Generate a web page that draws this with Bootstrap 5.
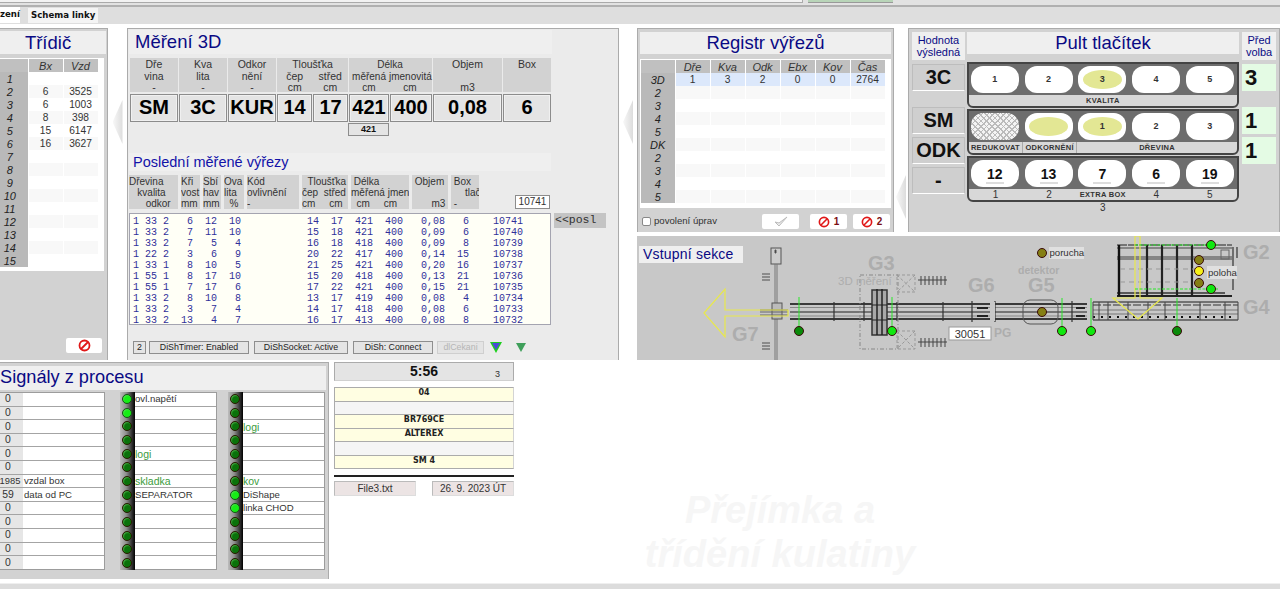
<!DOCTYPE html>
<html lang="cs">
<head>
<meta charset="UTF-8" />
<meta name="viewport" content="width=device-width, initial-scale=1" />
<title>Přejímka a třídění kulatiny</title>
<link href="https://cdn.jsdelivr.net/npm/bootstrap@5.3.0/dist/css/bootstrap.min.css" rel="stylesheet" />
<style>
body { background: #fff; font-family: "Liberation Sans", Arial, sans-serif; font-size: 11px; color: #333; overflow: hidden; }
.desk { width: 1280px; height: 589px; overflow: hidden; }

/* top strip and tabs */
.top-strip { height: 7px; background: #e2e2e2; border-bottom: 2px solid #b0b0b0; align-items: flex-start; }
.strip-white { width: 803px; height: 3px; background: #f2f2f2; border-bottom: 1px solid #aaa; border-right: 1px solid #aaa; }
.strip-green { width: 85px; height: 3px; margin-left: 5px; background: #b8d4b8; border-bottom: 1px solid #999; }
.tab-strip { height: 17px; background: #dedede; margin-bottom: 4px; }
.tab-strip .nav-link { font-family: "DejaVu Sans", sans-serif; font-weight: 700; font-size: 8.6px; color: #111; padding: 2px 3px; height: 15px; line-height: 11px; background: #f4f4f4; margin: 1px 0 0 8px; }
.tab-strip .nav-link.active-tab { background: #fff; margin: 0; width: 20px; height: 16px; padding: 2px 0 0 0; }

.win { border: 1px solid #ababab; border-bottom: 0; }
.win-mid { background: #d2d2d2; }
.win-light { background: #ebebeb; }
.win-title { font-size: 18.5px; line-height: 23px; color: #0a0a84; background: #efefef; }

.desk-top { height: 332px; }
.desk-bottom { height: 217px; margin-top: 2px; }
.chev-gap { flex: 0 0 auto; display: flex; justify-content: center; }
.chev { width: 10px; height: 44px; margin-top: 72px; background: linear-gradient(90deg, #f8f8f8, #dcdcdc); clip-path: polygon(100% 0, 0 50%, 100% 100%); }
.gap-19 { width: 19px; }
.gap-18 { width: 18px; }

/* Tridic */
.sorter { width: 108px; border-left: 0; }
.sorter .win-title { width: 106px; margin: 2px 0 4px; text-align: center; padding-right: 10px; }
.sorter-box { background: #fff; width: 104px; height: 213px; padding-top: 1px; }
.grid-tbl { border-collapse: collapse; table-layout: fixed; }
.grid-tbl td, .grid-tbl th { height: 13px; padding: 0; text-align: center; font-size: 10.2px; line-height: 12px; font-weight: 400; border-right: 1px solid #fff; }
.grid-tbl th { background: #b9b9b9; font-size: 11px; font-style: italic; color: #222; }
.grid-tbl thead th { background: #c0c0c0; color: #333; }
.grid-tbl tbody tr:nth-child(even) td { background: #f8f8f8; }
.sorter .grid-tbl th:first-child { width: 28px; padding-right: 8px; }
.sorter .grid-tbl td, .sorter .grid-tbl thead th:not(:first-child) { width: 35px; }
.stop-btn { display: flex; align-items: center; justify-content: center; padding: 0; border: 0; border-radius: 2px; background: #fff; width: 36px; height: 15px; color: #7a0d12; font-weight: 700; font-size: 10px; gap: 4px; }
.sorter .stop-btn { margin: 67px 0 0 66px; }

/* Mereni 3D */
.measure { width: 492px; padding: 1px 0 0 1px; position: relative; }
.measure .win-title { width: 423px; height: 24px; padding-left: 6px; margin-bottom: 4px; }
.meas-grid { display: grid; grid-template-columns: 48px 48px 48px 35px 35px 40px 42px 69px 48px; column-gap: 1px; margin-left: 1px; width: 422px; }
.meas-head { background: #d2d2d2; height: 34px; text-align: center; font-size: 10.5px; line-height: 11.5px; padding-top: 1px; color: #333; }
.meas-head.wide2 { grid-column: span 2; display: grid; grid-template-columns: 1fr 1fr; }
.meas-head.wide2 > div:first-child { grid-column: span 2; }
.meas-head.tight { font-size: 10px; white-space: nowrap; grid-template-columns: 40px 42px; }
.meas-val { margin-top: 2px; height: 28px; background: #e4e4e4; border: 1px solid #8c8c8c; box-shadow: inset 0 0 0 1px #f0f0f0; font-weight: 700; font-size: 20px; line-height: 25px; text-align: center; color: #000; overflow: hidden; white-space: nowrap; }
.meas-sub { margin: 1px 0 0 219px; width: 41px; height: 13px; border: 1px solid #8c8c8c; background: #e4e4e4; font-size: 9px; font-weight: 700; line-height: 11px; text-align: center; color: #111; }
.sub-title { width: 422px; height: 18px; margin-top: 17px; background: #efefef; color: #1212a8; font-size: 14.5px; line-height: 18px; padding-left: 4px; }
.hist-head { display: grid; grid-template-columns: 49px 19px 18px 20px 52px 46px 58px 36px 28px; column-gap: 3px; margin-top: 4px; height: 34px; align-items: stretch; position: relative; }
.hist-head > div { background: #d2d2d2; font-size: 10px; line-height: 11px; white-space: pre; padding-top: 1px; color: #333; overflow: hidden; }
.hist-head > .last-id { position: absolute; left: 386px; top: 20px; width: 35px; height: 14px; border: 1px solid #8c8c8c; background: #fff; text-align: center; padding: 0; line-height: 12px; font-size: 10px; }
.hist-wrap { display: flex; margin-top: 4px; }
.hist-list { width: 422px; height: 112px; border: 1px solid #a4a4b0; background: #fffff6; margin: 0; padding: 2px 0 0 3px; font-family: "Liberation Mono", monospace; font-size: 10px; line-height: 11px; color: #30309a; overflow: hidden; white-space: pre; }
.posl { margin-left: 3px; width: 52px; height: 15px; background: #c4c4c4; font-family: "Liberation Mono", monospace; font-size: 11.5px; line-height: 13px; padding-left: 1px; color: #333; }
.status-row { display: flex; align-items: center; margin-top: 16px; margin-left: 4px; }
.stat { height: 13px; border: 1px solid #8e8e8e; background: #e4e4e4; font-size: 8.8px; line-height: 11px; text-align: center; color: #222; margin-right: 3px; white-space: nowrap; }
.stat.off { color: #b5b5b5; border-color: #cfcfcf; margin-right: 6px; }
.s-num { width: 13px; }
.s-timer { width: 100px; margin-right: 5px; }
.s-sock { width: 94px; margin-right: 5px; }
.s-conn { width: 80px; margin-right: 4px; }
.s-wait { width: 47px; }
.tri { width: 0; height: 0; border-left: 6px solid transparent; border-right: 6px solid transparent; }
.tri-blue { border-top: 11px solid #1ed01e; position: relative; }
.tri-blue::after { content: ""; position: absolute; left: -4px; top: -10px; border-left: 4px solid transparent; border-right: 4px solid transparent; border-top: 7px solid #4a4ad8; }
.tri-green { margin-left: 14px; border-left-width: 5px; border-right-width: 5px; border-top: 9px solid #3f9f5a; }

/* right column */
.right-col { width: 643px; }
.reg { width: 257px; height: 204px; padding: 3px 2px 0; position: relative; }
.reg .win-title { height: 22px; line-height: 22px; text-align: center; margin-bottom: 5px; }
.reg-box { background: #fff; height: 149px; padding: 1px 0 0 1px; }
.reg .grid-tbl th:first-child { width: 34px; }
.reg .grid-tbl td, .reg .grid-tbl thead th:not(:first-child) { width: 35px; }
.reg .grid-tbl tr.cur td { background: #dce8fb; }
.reg-foot { display: flex; align-items: center; height: 23px; padding: 4px 1px 0 2px; }
.reg-foot .form-check-input { width: 9px; height: 9px; margin: 0 3px 0 0; border-radius: 2px; border-color: #888; }
.reg-foot label { font-size: 9.6px; color: #333; }
.reg-foot .stop-btn { width: 37px; margin-left: 6px; }
.reg-foot .check-btn { margin-left: auto; margin-right: 5px; }

.chev-pult { position: absolute; right: -13px; top: 74px; width: 10px; }
.pult { width: 372px; height: 204px; margin-left: 14px; padding: 3px 3px 0 3px; display: flex; gap: 2px; }
.side-col { width: 53px; }
.side-head { height: 28px; background: #efefef; color: #0a0a84; font-size: 11px; line-height: 12px; text-align: center; padding-top: 2px; margin-bottom: 4px; }
.side-val { height: 27px; margin-bottom: 3px; background: #cfcfcf; border: 1px solid #bdbdbd; border-bottom: 1px solid #fff; font-size: 20px; font-weight: 700; line-height: 25px; text-align: center; color: #111; }
.side-val.green { background: #e4fbe4; border-color: #e4fbe4; text-align: left; padding-left: 2px; font-size: 22px; }
.side-val.drop { margin-top: 16px; }
.mid-col { width: 273px; }
.mid-col .win-title { height: 22px; text-align: center; line-height: 22px; margin-bottom: 8px; }
.pr-col { width: 34px; margin-left: 1px; }
.btn-box { border: 2px solid #444; border-radius: 0 0 6px 6px; margin-bottom: 1px; background: #d8d8d8; width: 272px; overflow: hidden; }
.btn-cells { display: flex; background: #6d6d6d; padding: 2px 3px 2px 2px; justify-content: space-between; }
.pill { width: 48px; height: 27px; background: #fff; border: 0; padding: 0; border-radius: 12px; font-size: 9px; font-weight: 700; color: #333; display: flex; align-items: center; justify-content: center; }
.ell { width: 39px; height: 19px; border-radius: 50%; background: #e3e794; display: flex; align-items: center; justify-content: center; }
.pill.hatch { background: repeating-linear-gradient(45deg, #bbb 0 1px, transparent 1px 4px), repeating-linear-gradient(-45deg, #bbb 0 1px, #f4f4f4 1px 4px); }
.num-tile { width: 18px; height: 20px; background: #fff; border-bottom: 2px solid #ddd; font-size: 14px; line-height: 20px; color: #111; text-align: center; }
.btn-labels { display: flex; height: 11px; font-size: 7.5px; line-height: 11px; font-weight: 700; color: #333; text-align: center; letter-spacing: .3px; white-space: nowrap; }
.btn-labels > div { flex: 1 1 0; }
.btn-labels > .drev { flex: 3 1 0; }
.btn-labels .plain { font-size: 10px; font-weight: 400; }
.lab-sep { border-right: 1px solid #aaa; }
.under-3 { text-align: center; font-size: 10px; line-height: 10px; color: #333; width: 272px; }

.entry { width: 643px; height: 124px; margin-top: 4px; background: #c8c8c8; position: relative; overflow: hidden; }
.entry svg { display: block; }
.entry-title { position: absolute; left: 2px; top: 10px; width: 104px; height: 17px; background: #efefef; color: #0a0a84; font-size: 14px; line-height: 17px; padding-left: 4px; letter-spacing: .2px; }
.diag-g { font-family: "Liberation Sans", Arial, sans-serif; font-weight: 700; font-size: 20px; fill: #adadad; }
.diag-s { font-size: 10.5px; }
.diag-n { font-size: 11.5px; font-weight: 400; }
.diag-p { font-size: 12px; }
.diag-t { font-family: "Liberation Sans", Arial, sans-serif; font-size: 9.6px; fill: #333; }
.diag-num { font-size: 11px; }

/* signals */
.signals { width: 329px; height: 217px; background: #d2d2d2; border-left: 0; padding-top: 3px; }
.signals .win-title { width: 326px; height: 24px; margin-bottom: 2px; font-size: 18.2px; }
.sig-wrap { display: flex; }
.sig-a { width: 105px; margin-right: 15px; }
.sig-b { margin-right: 11px; }
.sig-tbl { display: flex; height: 178px; }
.led-strip { width: 15px; display: flex; flex-direction: column; background: linear-gradient(90deg, #bcbcbc, #909090 40%, #000); }
.led-strip > div { flex: 1 1 0; display: flex; align-items: center; justify-content: flex-start; padding-left: 2px; }
.led { width: 10px; height: 10px; border-radius: 50%; background: #0a720a; border: 1px solid #2a1a00; box-shadow: inset 1px 1px 1px rgba(120,220,120,.5); }
.led.on { background: #16ee16; border-color: #185018; }
.sig-rows { display: flex; flex-direction: column; width: 82px; border: 1px solid #9c9c9c; border-left: 0; }
.sig-a .sig-rows { width: 105px; }
.sig-rows > div { flex: 1 1 0; background: #fff; border-bottom: 1px solid #a4a4a4; font-size: 9.6px; line-height: 12px; white-space: nowrap; color: #333; display: flex; align-items: center; }
.sig-rows > div:last-child { border-bottom: 0; }
.sig-rows > .green-t { color: #3c9c3c; font-size: 10.5px; }
.sval { width: 23px; height: 100%; flex: 0 0 23px; background: #e6e6e6; display: flex; justify-content: center; padding-right: 7px; align-items: center; color: #333; font-size: 10.4px; margin-right: 1px; }
.sval.sval-wide { padding-right: 3px; font-size: 9.4px; }

/* clock column */
.clock-col { width: 180px; margin-left: 5px; }
.clock { height: 19px; background: #e4e4e4; border: 1px solid #ababab; border-bottom-color: #d0d0d0; display: flex; font-weight: 700; font-size: 14px; line-height: 17px; color: #111; margin-bottom: 6px; position: relative; }
.clock-n { position: absolute; right: 13px; top: 3px; font-size: 9px; font-weight: 400; color: #333; }
.ticket { height: 13.6px; background: #fffee2; border: 1px solid #ababab; border-right-color: #d4d4d4; border-bottom: 0; font-family: "DejaVu Sans", sans-serif; font-weight: 700; font-size: 8px; line-height: 10px; text-align: center; color: #222; }
.ticket.blank { background: #f5f5f5; }
.ticket.ticket-end { border-bottom: 1px solid #ababab; height: 14px; }
.heavy-line { height: 2px; background: #222; margin: 6px 0 4px; width: 180px; }
.file-cell { width: 82px; height: 15px; background: #ece4e4; border: 1px solid #ddd; border-top: 1px solid #bbb; border-left: 1px solid #bbb; font-size: 10px; line-height: 13px; text-align: center; color: #333; }

.watermark { width: 400px; margin-left: 66px; padding-top: 126px; text-align: center; font-weight: 700; font-style: italic; font-size: 38px; line-height: 44px; color: #f6f6f6; white-space: nowrap; }
.foot-strip { height: 6px; margin-top: 4px; background: #dcdcdc; border-top: 1px solid #efefef; }
</style>
</head>
<body>
<div class="desk">
    <div class="top-strip d-flex"><div class="strip-white"></div><div class="strip-green"></div></div>
    <!-- Tabs -->
    <ul class="nav tab-strip">
        <li class="nav-item"><a class="nav-link active-tab" href="#">zení</a></li>
        <li class="nav-item"><a class="nav-link" href="#">Schema linky</a></li>
    </ul>

    <div class="d-flex desk-top">
        <!-- Tridic -->
        <div class="win win-mid sorter">
            <div class="win-title">Třídič</div>
            <div class="sorter-box">
                <table class="grid-tbl">
                    <thead><tr><th></th><th>Bx</th><th>Vzd</th></tr></thead>
                    <tbody>
                    <tr><th>1</th><td></td><td></td></tr>
                    <tr><th>2</th><td>6</td><td>3525</td></tr>
                    <tr><th>3</th><td>6</td><td>1003</td></tr>
                    <tr><th>4</th><td>8</td><td>398</td></tr>
                    <tr><th>5</th><td>15</td><td>6147</td></tr>
                    <tr><th>6</th><td>16</td><td>3627</td></tr>
                    <tr><th>7</th><td></td><td></td></tr>
                    <tr><th>8</th><td></td><td></td></tr>
                    <tr><th>9</th><td></td><td></td></tr>
                    <tr><th>10</th><td></td><td></td></tr>
                    <tr><th>11</th><td></td><td></td></tr>
                    <tr><th>12</th><td></td><td></td></tr>
                    <tr><th>13</th><td></td><td></td></tr>
                    <tr><th>14</th><td></td><td></td></tr>
                    <tr><th>15</th><td></td><td></td></tr>
                    </tbody>
                </table>
            </div>
            <button class="stop-btn" type="button"><svg width="13" height="13" viewBox="0 0 13 13"><circle cx="6.5" cy="6.5" r="5" fill="none" stroke="#e01818" stroke-width="1.8"/><path d="M3 10 10 3" stroke="#e01818" stroke-width="1.8"/></svg></button>
        </div>
        <div class="chev-gap gap-19"><div class="chev"></div></div>

        <!-- Mereni 3D -->
        <div class="win win-light measure">
            <div class="win-title">Měření 3D</div>
            <div class="meas-grid">
                <div class="meas-head">Dře<br>vina<br>-</div>
                <div class="meas-head">Kva<br>lita<br>-</div>
                <div class="meas-head">Odkor<br>nění<br>-</div>
                <div class="meas-head wide2"><div>Tloušťka</div><div>čep<br>cm</div><div>střed<br>cm</div></div>
                <div class="meas-head wide2 tight"><div>Délka</div><div>měřená<br>cm</div><div>jmenovitá<br>cm</div></div>
                <div class="meas-head">Objem<br><br>m3</div>
                <div class="meas-head">Box</div>
                <div class="meas-val">SM</div>
                <div class="meas-val">3C</div>
                <div class="meas-val">KUR</div>
                <div class="meas-val">14</div>
                <div class="meas-val">17</div>
                <div class="meas-val">421</div>
                <div class="meas-val">400</div>
                <div class="meas-val">0,08</div>
                <div class="meas-val">6</div>
            </div>
            <div class="meas-sub">421</div>
            <div class="sub-title">Poslední měřené výřezy</div>
            <div class="hist-head">
                <div>Dřevina
   kvalita
      odkor</div>
                <div>Kři
vost
mm</div>
                <div>Sbí
hav
mm</div>
                <div>Ova
lita
  %</div>
                <div>Kód
ovlivnění
-</div>
                <div>  Tloušťka
čep  střed
cm     cm</div>
                <div> Délka
měřená jmen
  cm     cm</div>
                <div> Objem

       m3</div>
                <div> Box
     tlač
 -</div>
                <div class="last-id">10741</div>
            </div>
            <div class="hist-wrap">
<pre class="hist-list">1 33 2   6  12  10           14  17  421  400   0,08   6    10741
1 33 2   7  11  10           15  18  421  400   0,09   6    10740
1 33 2   7   5   4           16  18  418  400   0,09   8    10739
1 22 2   3   6   9           20  22  417  400   0,14  15    10738
1 33 1   8  10   5           21  25  421  400   0,20  16    10737
1 55 1   8  17  10           15  20  418  400   0,13  21    10736
1 55 1   7  17   6           17  22  421  400   0,15  21    10735
1 33 2   8  10   8           13  17  419  400   0,08   4    10734
1 33 2   3   7   4           14  17  418  400   0,08   6    10733
1 33 2  13   4   7           16  17  413  400   0,08   8    10732</pre>
                <div class="posl">&lt;&lt;posl</div>
            </div>
            <div class="status-row">
                <div class="stat s-num">2</div>
                <div class="stat s-timer">DiShTimer: Enabled</div>
                <div class="stat s-sock">DiShSocket: Active</div>
                <div class="stat s-conn">DiSh: Connect</div>
                <div class="stat off s-wait">dlCekani</div>
                <div class="tri tri-blue"></div>
                <div class="tri tri-green"></div>
            </div>
        </div>
        <div class="chev-gap gap-18"><div class="chev"></div></div>

        <!-- Right column -->
        <div class="right-col">
            <div class="d-flex">
                <div class="win win-mid reg">
                    <div class="win-title">Registr výřezů</div>
                    <div class="reg-box">
                        <table class="grid-tbl">
                            <thead><tr><th></th><th>Dře</th><th>Kva</th><th>Odk</th><th>Ebx</th><th>Kov</th><th>Čas</th></tr></thead>
                            <tbody>
                            <tr class="cur"><th>3D</th><td>1</td><td>3</td><td>2</td><td>0</td><td>0</td><td>2764</td></tr>
                            <tr><th>2</th><td></td><td></td><td></td><td></td><td></td><td></td></tr>
                            <tr><th>3</th><td></td><td></td><td></td><td></td><td></td><td></td></tr>
                            <tr><th>4</th><td></td><td></td><td></td><td></td><td></td><td></td></tr>
                            <tr><th>5</th><td></td><td></td><td></td><td></td><td></td><td></td></tr>
                            <tr><th>DK</th><td></td><td></td><td></td><td></td><td></td><td></td></tr>
                            <tr><th>2</th><td></td><td></td><td></td><td></td><td></td><td></td></tr>
                            <tr><th>3</th><td></td><td></td><td></td><td></td><td></td><td></td></tr>
                            <tr><th>4</th><td></td><td></td><td></td><td></td><td></td><td></td></tr>
                            <tr><th>5</th><td></td><td></td><td></td><td></td><td></td><td></td></tr>
                            </tbody>
                        </table>
                    </div>
                    <div class="reg-foot">
                        <input class="form-check-input" type="checkbox" id="povoleni" />
                        <label for="povoleni">povolení úprav</label>
                        <button class="stop-btn check-btn" type="button"><svg width="16" height="13" viewBox="0 0 16 13"><path d="M2 7 6 11 14 2 6 8Z" fill="#eee" stroke="#bbb"/></svg></button>
                        <button class="stop-btn" type="button"><svg width="12" height="12" viewBox="0 0 13 13"><circle cx="6.5" cy="6.5" r="5" fill="none" stroke="#e01818" stroke-width="1.8"/><path d="M3 10 10 3" stroke="#e01818" stroke-width="1.8"/></svg>1</button>
                        <button class="stop-btn" type="button"><svg width="12" height="12" viewBox="0 0 13 13"><circle cx="6.5" cy="6.5" r="5" fill="none" stroke="#e01818" stroke-width="1.8"/><path d="M3 10 10 3" stroke="#e01818" stroke-width="1.8"/></svg>2</button>
                    </div>
                    <div class="chev chev-pult"></div>
                </div>
                <div class="win win-mid pult">
                    <div class="side-col">
                        <div class="side-head">Hodnota výsledná</div>
                        <div class="side-val">3C</div>
                        <div class="side-val drop">SM</div>
                        <div class="side-val">ODK</div>
                        <div class="side-val">-</div>
                    </div>
                    <div class="mid-col">
                        <div class="win-title">Pult tlačítek</div>
                        <div class="btn-box">
                            <div class="btn-cells">
                                <button class="pill" type="button">1</button>
                                <button class="pill" type="button">2</button>
                                <button class="pill" type="button"><span class="ell">3</span></button>
                                <button class="pill" type="button">4</button>
                                <button class="pill" type="button">5</button>
                            </div>
                            <div class="btn-labels"><div>KVALITA</div></div>
                        </div>
                        <div class="btn-box">
                            <div class="btn-cells">
                                <button class="pill hatch" type="button"></button>
                                <button class="pill" type="button"><span class="ell"></span></button>
                                <button class="pill" type="button"><span class="ell">1</span></button>
                                <button class="pill" type="button">2</button>
                                <button class="pill" type="button">3</button>
                            </div>
                            <div class="btn-labels"><div class="lab-sep">REDUKOVAT</div><div class="lab-sep">ODKORNĚNÍ</div><div class="drev">DŘEVINA</div></div>
                        </div>
                        <div class="btn-box">
                            <div class="btn-cells">
                                <button class="pill" type="button"><span class="num-tile">12</span></button>
                                <button class="pill" type="button"><span class="num-tile">13</span></button>
                                <button class="pill" type="button"><span class="num-tile">7</span></button>
                                <button class="pill" type="button"><span class="num-tile">6</span></button>
                                <button class="pill" type="button"><span class="num-tile">19</span></button>
                            </div>
                            <div class="btn-labels"><div class="plain">1</div><div class="plain">2</div><div>EXTRA BOX</div><div class="plain">4</div><div class="plain">5</div></div>
                        </div>
                        <div class="under-3">3</div>
                    </div>
                    <div class="pr-col">
                        <div class="side-head">Před volba</div>
                        <div class="side-val green">3</div>
                        <div class="side-val green drop">1</div>
                        <div class="side-val green">1</div>
                    </div>
                </div>
            </div>

            <!-- Vstupni sekce -->
            <div class="entry">
                <svg width="643" height="124" viewBox="637 236 643 124">
                    <!-- side track -->
                    <g stroke="#555" fill="none">
                        <rect x="771" y="248" width="10" height="16" fill="#ccc"/>
                        <path d="M775 250h1v3h-1z" fill="#222"/>
                        <path d="M775 264V360M777 264V360" stroke="#777"/>
                        <rect x="772" y="303" width="10" height="16" fill="#bbb"/>
                        <path d="M760 310H788M760 312H788M760 315H788" stroke="#666"/>
                        <path d="M762 274H770M762 277H770M762 280H770" stroke="#777" stroke-width="1.4"/>
                        <path d="M762 343H770M762 346H770M762 349H770" stroke="#777" stroke-width="1.4"/>
                    </g>
                    <!-- main rail -->
                    <g fill="none">
                        <path d="M790 304H1087M790 319H1087" stroke="#3a3a3a" stroke-width="2"/>
                        <path d="M790 307.5H1087M790 316H1087" stroke="#888"/>
                        <path d="M790 312H1087" stroke="#5a5a5a" stroke-width="1.5"/>
                        <path d="M834 302V321M864 302V321M897 302V321M943 302V321M972 301V322M995 301V322M1072 301V322" stroke="#333" stroke-width="1.2"/>
                        <path d="M977 308H988M977 316H988M1076 308H1085M1076 316H1085" stroke="#222" stroke-width="2"/>
                        <rect x="990" y="302" width="5" height="19" fill="#c8c8c8"/>
                    </g>
                    <!-- G3 measuring gate -->
                    <g fill="none">
                        <rect x="860" y="275" width="38" height="74" stroke="#888" stroke-dasharray="4 2 1 2"/>
                        <rect x="872" y="290" width="15" height="45" fill="#a8a8a8" stroke="#333" stroke-width="1.5"/>
                        <path d="M877 289V335M882 289V335" stroke="#222" stroke-width="1.5"/>
                        <path d="M872 305H887M872 320H887" stroke="#222"/>
                        <path d="M897 275H915V292H897ZM897 275 915 292M915 275 897 292M897 331H915V349H897ZM897 331 915 349M915 331 897 349" stroke="#999" stroke-dasharray="3 2"/>
                        <path d="M918 280H947M918 342H947" stroke="#444"/>
                        <path d="M921 276V285M925 276V285M929 276V285M933 276V285M937 276V285M941 276V285M945 276V285M921 338V347M925 338V347M929 338V347M933 338V347M937 338V347M941 338V347M945 338V347" stroke="#444"/>
                    </g>
                    <!-- G4 cross conveyor -->
                    <g fill="none">
                        <path d="M1093 302H1238M1093 320H1238" stroke="#555" stroke-width="1.4"/>
                        <path d="M1093 305H1238" stroke="#333" stroke-dasharray="8 2"/>
                        <path d="M1093 310H1238M1093 314H1238" stroke="#777"/>
                        <path d="M1093 317H1235" stroke="#111" stroke-width="2" stroke-dasharray="2 6"/>
                        <path d="M1093 302V320M1099 302V320M1108 302V320M1128 302V320M1148 302V320M1165 302V320M1200 302V320M1225 302V320M1238 302V320" stroke="#444"/>
                    </g>
                    <!-- G2 transfer table -->
                    <g fill="none">
                        <path d="M1117 245H1232" stroke="#222" stroke-dasharray="10 1"/>
                        <path d="M1117 248H1232M1117 257H1232M1117 259H1232" stroke="#444"/>
                        <path d="M1117 293H1225" stroke="#333" stroke-width="1.5"/>
                        <path d="M1117 296H1232" stroke="#222" stroke-width="2"/>
                        <path d="M1119 245V296" stroke="#111" stroke-width="2.4"/>
                        <path d="M1147 245V296M1162 245V296M1177 245V296M1192 245V296" stroke="#222" stroke-width="2.2"/>
                        <path d="M1233 247V267M1233 279V290M1237 247V258" stroke="#333" stroke-width="1.2"/>
                        <rect x="1221" y="250" width="8" height="9" stroke="#666"/>
                        <path d="M1120 269H1200M1120 282H1190" stroke="#999" stroke-dasharray="5 4"/>
                    </g>
                    <!-- yellow arrows -->
                    <g fill="none" stroke="#e8e84c" stroke-width="1.2">
                        <path d="M704 313 725 289V310H788V316H725V337Z"/>
                        <path d="M1135 236H1140V298H1162L1138 319 1113 298H1135Z"/>
                    </g>
                    <!-- sensor beams -->
                    <g stroke="#28e828" stroke-width="1">
                        <path d="M799 297V327M892 297V327M1062 298V327M1091 298V327M1177 298V327"/>
                        <path d="M1135 245H1218M1135 289H1218" stroke-dasharray="3 1.5"/>
                    </g>
                    <rect x="1023" y="300" width="35" height="24" rx="7" fill="none" stroke="#555"/>
                    <!-- leds -->
                    <g stroke="#3a0a0a" stroke-width="1">
                        <circle cx="799" cy="331" r="4.5" fill="#0a8a0a"/>
                        <circle cx="892" cy="331" r="4.5" fill="#10e810"/>
                        <circle cx="1062" cy="331" r="4.5" fill="#10e810"/>
                        <circle cx="1091" cy="331" r="4.5" fill="#10e810"/>
                        <circle cx="1177" cy="331" r="4.5" fill="#0a8a0a"/>
                        <circle cx="1211" cy="245" r="4.5" fill="#10e810"/>
                        <circle cx="1211" cy="289" r="4.5" fill="#10e810"/>
                        <circle cx="1042" cy="312" r="4.5" fill="#857f14"/>
                        <circle cx="1042" cy="253" r="4.5" fill="#857f14"/>
                        <circle cx="1199" cy="260" r="4.5" fill="#857f14"/>
                        <circle cx="1199" cy="271" r="4.5" fill="#f6f018"/>
                        <circle cx="1199" cy="283" r="4.5" fill="#857f14"/>
                    </g>
                    <!-- labels -->
                    <text class="diag-g" x="732" y="341">G7</text>
                    <text class="diag-g" x="868" y="270">G3</text>
                    <text class="diag-g" x="968" y="292">G6</text>
                    <text class="diag-g" x="1028" y="292">G5</text>
                    <text class="diag-g" x="1243" y="259">G2</text>
                    <text class="diag-g" x="1243" y="314">G4</text>
                    <text class="diag-g diag-p" x="994" y="337">PG</text>
                    <text class="diag-g diag-s" x="1018" y="274">detektor</text>
                    <text class="diag-g diag-n" x="838" y="285">3D měření</text>
                    <rect x="949" y="327" width="42" height="13" fill="#fff" stroke="#999"/>
                    <text class="diag-t diag-num" x="970" y="337.5" text-anchor="middle">30051</text>
                    <rect x="1049" y="247" width="35" height="12" fill="#e0e0e0"/>
                    <text class="diag-t" x="1049.5" y="256">porucha</text>
                    <rect x="1207" y="266" width="30" height="13" fill="#e0e0e0"/>
                    <text class="diag-t" x="1208" y="275.5">poloha</text>
                </svg>
                <div class="entry-title">Vstupní sekce</div>
            </div>
        </div>
    </div>

    <div class="d-flex desk-bottom">
        <!-- Signaly z procesu -->
        <div class="win signals">
            <div class="win-title">Signály z procesu</div>
            <div class="sig-wrap">
                <div class="sig-tbl sig-a">
                    <div class="sig-rows">
                        <div><span class="sval">0</span></div>
                        <div><span class="sval">0</span></div>
                        <div><span class="sval">0</span></div>
                        <div><span class="sval">0</span></div>
                        <div><span class="sval">0</span></div>
                        <div><span class="sval">0</span></div>
                        <div><span class="sval sval-wide">1985</span>vzdal box</div>
                        <div><span class="sval">59</span>data od PC</div>
                        <div><span class="sval">0</span></div>
                        <div><span class="sval">0</span></div>
                        <div><span class="sval">0</span></div>
                        <div><span class="sval">0</span></div>
                        <div><span class="sval">0</span></div>
                    </div>
                </div>
                <div class="sig-tbl sig-b">
                    <div class="led-strip">
                        <div><span class="led on"></span></div>
                        <div><span class="led on"></span></div>
                        <div><span class="led"></span></div>
                        <div><span class="led"></span></div>
                        <div><span class="led"></span></div>
                        <div><span class="led"></span></div>
                        <div><span class="led"></span></div>
                        <div><span class="led"></span></div>
                        <div><span class="led"></span></div>
                        <div><span class="led"></span></div>
                        <div><span class="led"></span></div>
                        <div><span class="led"></span></div>
                        <div><span class="led"></span></div>
                    </div>
                    <div class="sig-rows">
                        <div>ovl.napětí</div>
                        <div></div>
                        <div></div>
                        <div></div>
                        <div class="green-t">logi</div>
                        <div></div>
                        <div class="green-t">skladka</div>
                        <div>SEPARATOR</div>
                        <div></div>
                        <div></div>
                        <div></div>
                        <div></div>
                        <div></div>
                    </div>
                </div>
                <div class="sig-tbl">
                    <div class="led-strip">
                        <div><span class="led"></span></div>
                        <div><span class="led"></span></div>
                        <div><span class="led"></span></div>
                        <div><span class="led"></span></div>
                        <div><span class="led"></span></div>
                        <div><span class="led"></span></div>
                        <div><span class="led"></span></div>
                        <div><span class="led on"></span></div>
                        <div><span class="led on"></span></div>
                        <div><span class="led"></span></div>
                        <div><span class="led"></span></div>
                        <div><span class="led"></span></div>
                        <div><span class="led"></span></div>
                    </div>
                    <div class="sig-rows">
                        <div></div>
                        <div></div>
                        <div class="green-t">logi</div>
                        <div></div>
                        <div></div>
                        <div></div>
                        <div class="green-t">kov</div>
                        <div>DiShape</div>
                        <div>linka CHOD</div>
                        <div></div>
                        <div></div>
                        <div></div>
                        <div></div>
                    </div>
                </div>
            </div>
        </div>

        <!-- Clock and ticket -->
        <div class="clock-col">
            <div class="clock"><span class="w-100 text-center">5:56</span><span class="clock-n">3</span></div>
            <div class="ticket">04</div>
            <div class="ticket blank"></div>
            <div class="ticket">BR769CE</div>
            <div class="ticket">ALTEREX</div>
            <div class="ticket blank"></div>
            <div class="ticket ticket-end">SM 4</div>
            <div class="heavy-line"></div>
            <div class="d-flex justify-content-between">
                <div class="file-cell">File3.txt</div>
                <div class="file-cell">26. 9. 2023 ÚT</div>
            </div>
        </div>

        <div class="watermark">Přejímka a<br>třídění kulatiny</div>
    </div>
    <div class="foot-strip"></div>
</div>
<script src="https://cdn.jsdelivr.net/npm/bootstrap@5.3.0/dist/js/bootstrap.bundle.min.js"></script>
</body>
</html>
